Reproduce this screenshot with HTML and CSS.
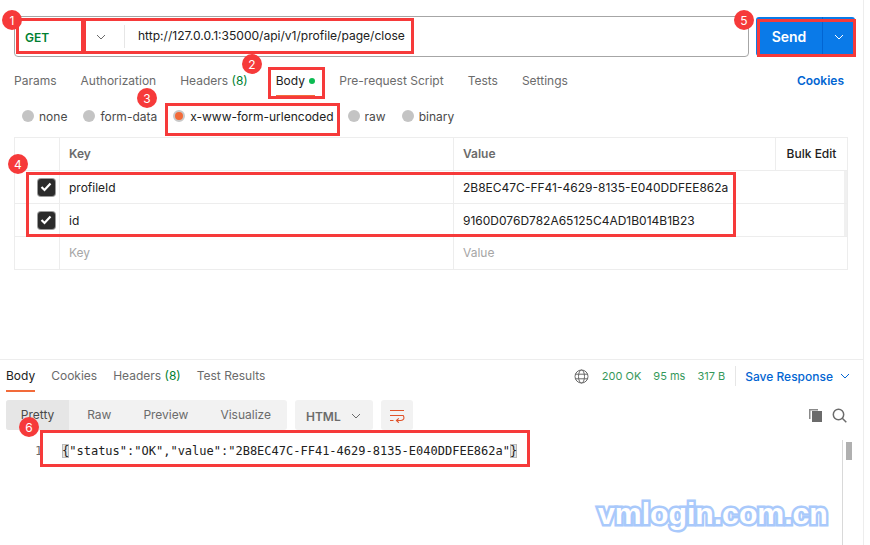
FILE: index.html
```html
<!DOCTYPE html>
<html lang="en">
<head>
<meta charset="utf-8">
<title>Postman request</title>
<link rel="stylesheet" href="styles.css">
</head>
<body>
<div class="app">
  <div class="url-row">
    <div class="url-bar">
      <span class="method">GET</span>
      <span class="method-arrow"><svg width="10" height="6" viewBox="0 0 10 6"><path d="M1 1l4 4 4-4" fill="none" stroke="#6b6b6b"/></svg></span>
      <span class="url">http://127.0.0.1:35000/api/v1/profile/page/close</span>
    </div>
    <div class="send">
      <span class="send-label">Send</span>
      <span class="send-arrow"><svg width="10" height="6" viewBox="0 0 10 6"><path d="M1 1l4 4 4-4" fill="none" stroke="#fff"/></svg></span>
    </div>
  </div>

  <div class="req-tabs">
    <span class="tab">Params</span>
    <span class="tab">Authorization</span>
    <span class="tab">Headers <em class="count">(8)</em></span>
    <span class="tab tab-active">Body <i class="dot"></i></span>
    <span class="tab">Pre-request Script</span>
    <span class="tab">Tests</span>
    <span class="tab">Settings</span>
    <span class="cookies">Cookies</span>
  </div>

  <div class="body-types">
    <label class="radio"><i class="circle"></i>none</label>
    <label class="radio"><i class="circle"></i>form-data</label>
    <label class="radio radio-on"><i class="circle"></i>x-www-form-urlencoded</label>
    <label class="radio"><i class="circle"></i>raw</label>
    <label class="radio"><i class="circle"></i>binary</label>
  </div>

  <div class="table">
    <div class="row row-head">
      <div class="c-check"></div>
      <div class="c-key">Key</div>
      <div class="c-value">Value</div>
      <div class="c-bulk">Bulk Edit</div>
    </div>
    <div class="row">
      <div class="c-check"><span class="check"><svg width="12" height="10" viewBox="0 0 12 10"><path d="M1.5 5l3 3 6-6.5" fill="none" stroke="#fff" stroke-width="2.2"/></svg></span></div>
      <div class="c-key">profileId</div>
      <div class="c-value c-wide">2B8EC47C-FF41-4629-8135-E040DDFEE862a</div>
    </div>
    <div class="row">
      <div class="c-check"><span class="check"><svg width="12" height="10" viewBox="0 0 12 10"><path d="M1.5 5l3 3 6-6.5" fill="none" stroke="#fff" stroke-width="2.2"/></svg></span></div>
      <div class="c-key">id</div>
      <div class="c-value c-wide">9160D076D782A65125C4AD1B014B1B23</div>
    </div>
    <div class="row row-empty">
      <div class="c-check"></div>
      <div class="c-key">Key</div>
      <div class="c-value c-wide">Value</div>
    </div>
  </div>

  <div class="response">
    <div class="res-tabs">
      <span class="res-tab res-active">Body</span>
      <span class="res-tab">Cookies</span>
      <span class="res-tab">Headers <em class="count">(8)</em></span>
      <span class="res-tab">Test Results</span>
      <div class="res-meta">
        <svg class="globe" width="15" height="15" viewBox="0 0 15 15" fill="none" stroke="#6b6b6b"><circle cx="7.5" cy="7.5" r="6.5"/><ellipse cx="7.5" cy="7.5" rx="3" ry="6.5"/><path d="M1 5.2h13M1 9.8h13"/></svg>
        <span class="ok">200 OK</span>
        <span class="ok">95 ms</span>
        <span class="ok">317 B</span>
        <span class="meta-sep"></span>
        <span class="save">Save Response</span>
        <svg width="10" height="6" viewBox="0 0 10 6"><path d="M1 1l4 4 4-4" fill="none" stroke="#0265d2"/></svg>
      </div>
    </div>

    <div class="toolbar">
      <div class="segments">
        <span class="seg seg-on">Pretty</span>
        <span class="seg">Raw</span>
        <span class="seg">Preview</span>
        <span class="seg">Visualize</span>
      </div>
      <div class="format">
        <span>HTML</span>
        <svg width="10" height="6" viewBox="0 0 10 6"><path d="M1 1l4 4 4-4" fill="none" stroke="#6b6b6b"/></svg>
      </div>
      <div class="wrap">
        <svg width="16" height="14" viewBox="0 0 16 14" fill="none" stroke="#e0532a" stroke-width="1.1"><path d="M1 1.5h14M1 6.5h13.2c1.6 2.8.3 5-2.2 5H7.5M9.8 9.3l-2.4 2.2 2.4 2.2M1 11.5h3.5"/></svg>
      </div>
      <div class="tools">
        <svg width="15" height="15" viewBox="0 0 15 15"><path d="M1 1h9v1.5H2.500V11H1z" fill="#8a8a8a"/><rect x="4" y="3" width="10" height="11" fill="#6b6b6b"/></svg>
        <svg width="15" height="15" viewBox="0 0 15 15" fill="none" stroke="#6b6b6b" stroke-width="1.500"><circle cx="6.500" cy="6.500" r="5.200"/><path d="M10.300 10.300l4 4"/></svg>
      </div>
    </div>

    <div class="code">
      <span class="line-no">1</span>
      <code class="json"><b class="brace">{</b><span class="key">"status"</span>:<span class="str">"OK"</span>,<span class="key">"value"</span>:<span class="str">"2B8EC47C-FF41-4629-8135-E040DDFEE862a"</span><b class="brace">}</b></code>
    </div>
  </div>

  <div class="scroll-track"><span class="scroll-thumb"></span></div>

  <span class="box box-method"></span>
  <span class="box box-url"></span>
  <span class="box box-body"></span>
  <span class="box box-type"></span>
  <span class="box box-rows"></span>
  <span class="box box-send"></span>
  <span class="box box-result"></span>

  <span class="badge b1">1</span>
  <span class="badge b2">2</span>
  <span class="badge b3">3</span>
  <span class="badge b4">4</span>
  <span class="badge b5">5</span>
  <span class="badge b6">6</span>

  <span class="watermark">vmlogin.com.cn</span>
</div>
</body>
</html>
```

FILE: styles.css
```css
* { box-sizing: border-box; }
html, body { margin: 0; padding: 0; background: #fff; }
body { font-family: Inter, "Liberation Sans", sans-serif; font-size: 12px; color: #212121; }
em, i { font-style: normal; }

.app { position: relative; width: 864px; height: 545px; border-right: 1px solid #ededed; overflow: hidden; }

.url-row { display: flex; gap: 7px; padding: 16px 0 0 14px; height: 57px; }
.url-bar { display: flex; align-items: center; width: 735px; height: 41px; border: 1px solid #a6a6a6; border-radius: 4px; }
.method { width: 65px; padding-left: 10px; font-weight: 600; font-size: 12px; color: #007f31; position: relative; top: 1px; }
.method-arrow { display: flex; justify-content: center; width: 46px; height: 23px; align-items: center; border-right: 1px solid #e6e6e6; margin-left: -1px; padding-right: 2px; }
.url { padding-left: 13px; font-size: 12.05px; color: #212121; position: relative; top: -1px; }
.send { display: flex; width: 99px; height: 39px; margin-top: 1px; background: #0a7ae8; border-radius: 3px; color: #fff; }
.send-label { width: 67px; display: flex; align-items: center; justify-content: center; font-weight: 600; font-size: 14px; border-right: 1px solid #0265d2; }
.send-arrow { flex: 1; display: flex; align-items: center; justify-content: center; }

.req-tabs { display: flex; align-items: center; height: 48px; padding: 0 19px 0 14px; color: #6b6b6b; position: relative; }
.tab { margin-right: 24px; height: 48px; line-height: 48px; white-space: nowrap; }
.tab-active { margin-left: 4px; color: #212121; position: relative; }
.tab-active::after { content: ""; position: absolute; left: 0; right: 0; top: 38px; height: 1px; background: #f26b3a; }
.count { color: #007f31; }
.dot { display: inline-block; width: 6px; height: 6px; border-radius: 50%; background: #0cbb52; margin-left: 1px; position: relative; top: -1px; }
.cookies { margin-left: auto; color: #0265d2; font-weight: 600; position: relative; top: -1px; }

.body-types { display: flex; align-items: center; height: 22px; padding-left: 22px; gap: 16px; }
.radio { display: inline-flex; align-items: center; gap: 5px; color: #4a4a4a; }
.radio-on { margin-right: -2px; color: #212121; }
.circle { display: inline-block; width: 12px; height: 12px; border-radius: 50%; background: #c4c4c4; }
.radio-on .circle { background: #f26b3a; border: 2px solid #c9c9c9; }

.table { width: 834px; margin: 10px 0 0 14px; border: 1px solid #ededed; color: #212121; }
.row { display: flex; height: 33px; border-bottom: 1px solid #ededed; align-items: stretch; }
.row:last-child { border-bottom: 0; height: 32px; }
.row > div { display: flex; align-items: center; }
.c-check { width: 45px; justify-content: center; border-right: 1px solid #ededed; padding-left: 18px; }
.c-key { width: 394px; padding-left: 9px; border-right: 1px solid #ededed; }
.c-value { width: 322px; padding-left: 9px; border-right: 1px solid #ededed; }
.c-wide { width: 393px; border-right: 3px solid #f0f0f0; }
.c-bulk { flex: 1; justify-content: center; font-weight: 500; color: #212121; padding-bottom: 1px; }
.row-head .c-key, .row-head .c-value { font-weight: 600; color: #6b6b6b; padding-bottom: 1px; }
.row-empty .c-key, .row-empty .c-value { color: #a6a6a6; padding-bottom: 2px; }
.row-empty .c-wide { border-right: 0; }
.check { display: flex; align-items: center; justify-content: center; width: 17px; height: 17px; background: #2b2b2b; border-radius: 3px; box-shadow: 0 0 0 1px #9a9a9a; }

.response { margin-top: 89px; border-top: 1px solid #ededed; }
.res-tabs { display: flex; align-items: center; height: 33px; padding: 0 13px 0 6px; color: #6b6b6b; gap: 16px; position: relative; }
.res-tab { line-height: 30px; height: 32px; }
.res-active { color: #212121; position: relative; }
.res-active::after { content: ""; position: absolute; left: 0; right: 0; top: 29px; height: 2px; background: #f26b3a; }
.res-meta { margin-left: auto; display: flex; align-items: center; gap: 9px; padding-bottom: 1px; }
.globe { margin-right: 4px; }
.ok { color: #007f31; opacity: .8; margin-right: 3px; font-size: 11px; }
.meta-sep { width: 1px; height: 20px; background: #e6e6e6; margin-left: -2px; }
.save { color: #0265d2; font-weight: 500; margin-right: -2px; }

.toolbar { display: flex; align-items: center; gap: 8px; height: 30px; margin-top: 7px; padding: 0 14px 0 6px; color: #6b6b6b; }
.segments { display: flex; width: 281px; height: 30px; background: #f2f2f2; border-radius: 3px; overflow: hidden; }
.seg { display: flex; align-items: center; justify-content: center; padding: 0 16px 2px; height: 30px; }
.seg-on { width: 66px; padding: 0 0 2px; margin-right: 2px; background: #e6e6e6; color: #4a4a4a; }
.format { display: flex; align-items: center; justify-content: space-between; width: 78px; height: 30px; padding: 2px 12px 0 11px; background: #f2f2f2; border-radius: 3px; font-weight: 600; color: #6b6b6b; }
.wrap { display: flex; align-items: center; justify-content: center; width: 32px; height: 30px; padding-top: 2px; background: #f2f2f2; border-radius: 3px; }
.tools { margin-left: auto; display: flex; gap: 9px; align-items: center; padding-right: 1px; margin-right: 1px; }

.code { display: flex; align-items: center; height: 20px; margin-top: 11px; padding-left: 35px; font-family: "DejaVu Sans Mono", "Liberation Mono", monospace; font-size: 12px; color: #212121; }
.line-no { width: 27px; color: #6b6b6b; }
.json { font-family: inherit; font-size: inherit; color: #212121; white-space: pre; }
.brace { font-weight: 400; background: #e3e3e3; box-shadow: inset 0 0 0 1px #b9b9b9; }

.scroll-track { position: absolute; left: 842px; top: 440px; width: 21px; height: 105px; border-left: 1px solid #d9d9d9; }
.scroll-thumb { position: absolute; left: 3px; top: 2px; width: 6px; height: 18px; background: #b0b0b0; }

.box { position: absolute; border: 3px solid #f63a3a; }
.box-method { left: 16px; top: 18px; width: 68px; height: 36px; }
.box-url { left: 83px; top: 18px; width: 331px; height: 36px; }
.box-body { left: 268px; top: 67px; width: 57px; height: 32px; }
.box-type { left: 165px; top: 103px; width: 175px; height: 33px; }
.box-rows { left: 26px; top: 172px; width: 710px; height: 65px; }
.box-send { left: 757px; top: 19px; width: 99px; height: 38px; }
.box-result { left: 40px; top: 430px; width: 490px; height: 37px; }

.badge { position: absolute; display: flex; align-items: center; justify-content: center; width: 20px; height: 20px; border-radius: 50%; background: #f63a3a; color: #fff; font-size: 12px; }
.b1 { left: 2px; top: 10px; }
.b2 { left: 242px; top: 54px; }
.b3 { left: 137px; top: 88px; }
.b4 { left: 8px; top: 154px; }
.b5 { left: 734px; top: 10px; }
.b6 { left: 19px; top: 417px; }

.watermark { position: absolute; left: 598px; top: 496px; font-family: "Liberation Sans", sans-serif; font-weight: 700; font-size: 30.2px; line-height: 36px; color: #fff; white-space: nowrap; -webkit-text-stroke: 5px #a9c9fb; paint-order: stroke fill; }
```
